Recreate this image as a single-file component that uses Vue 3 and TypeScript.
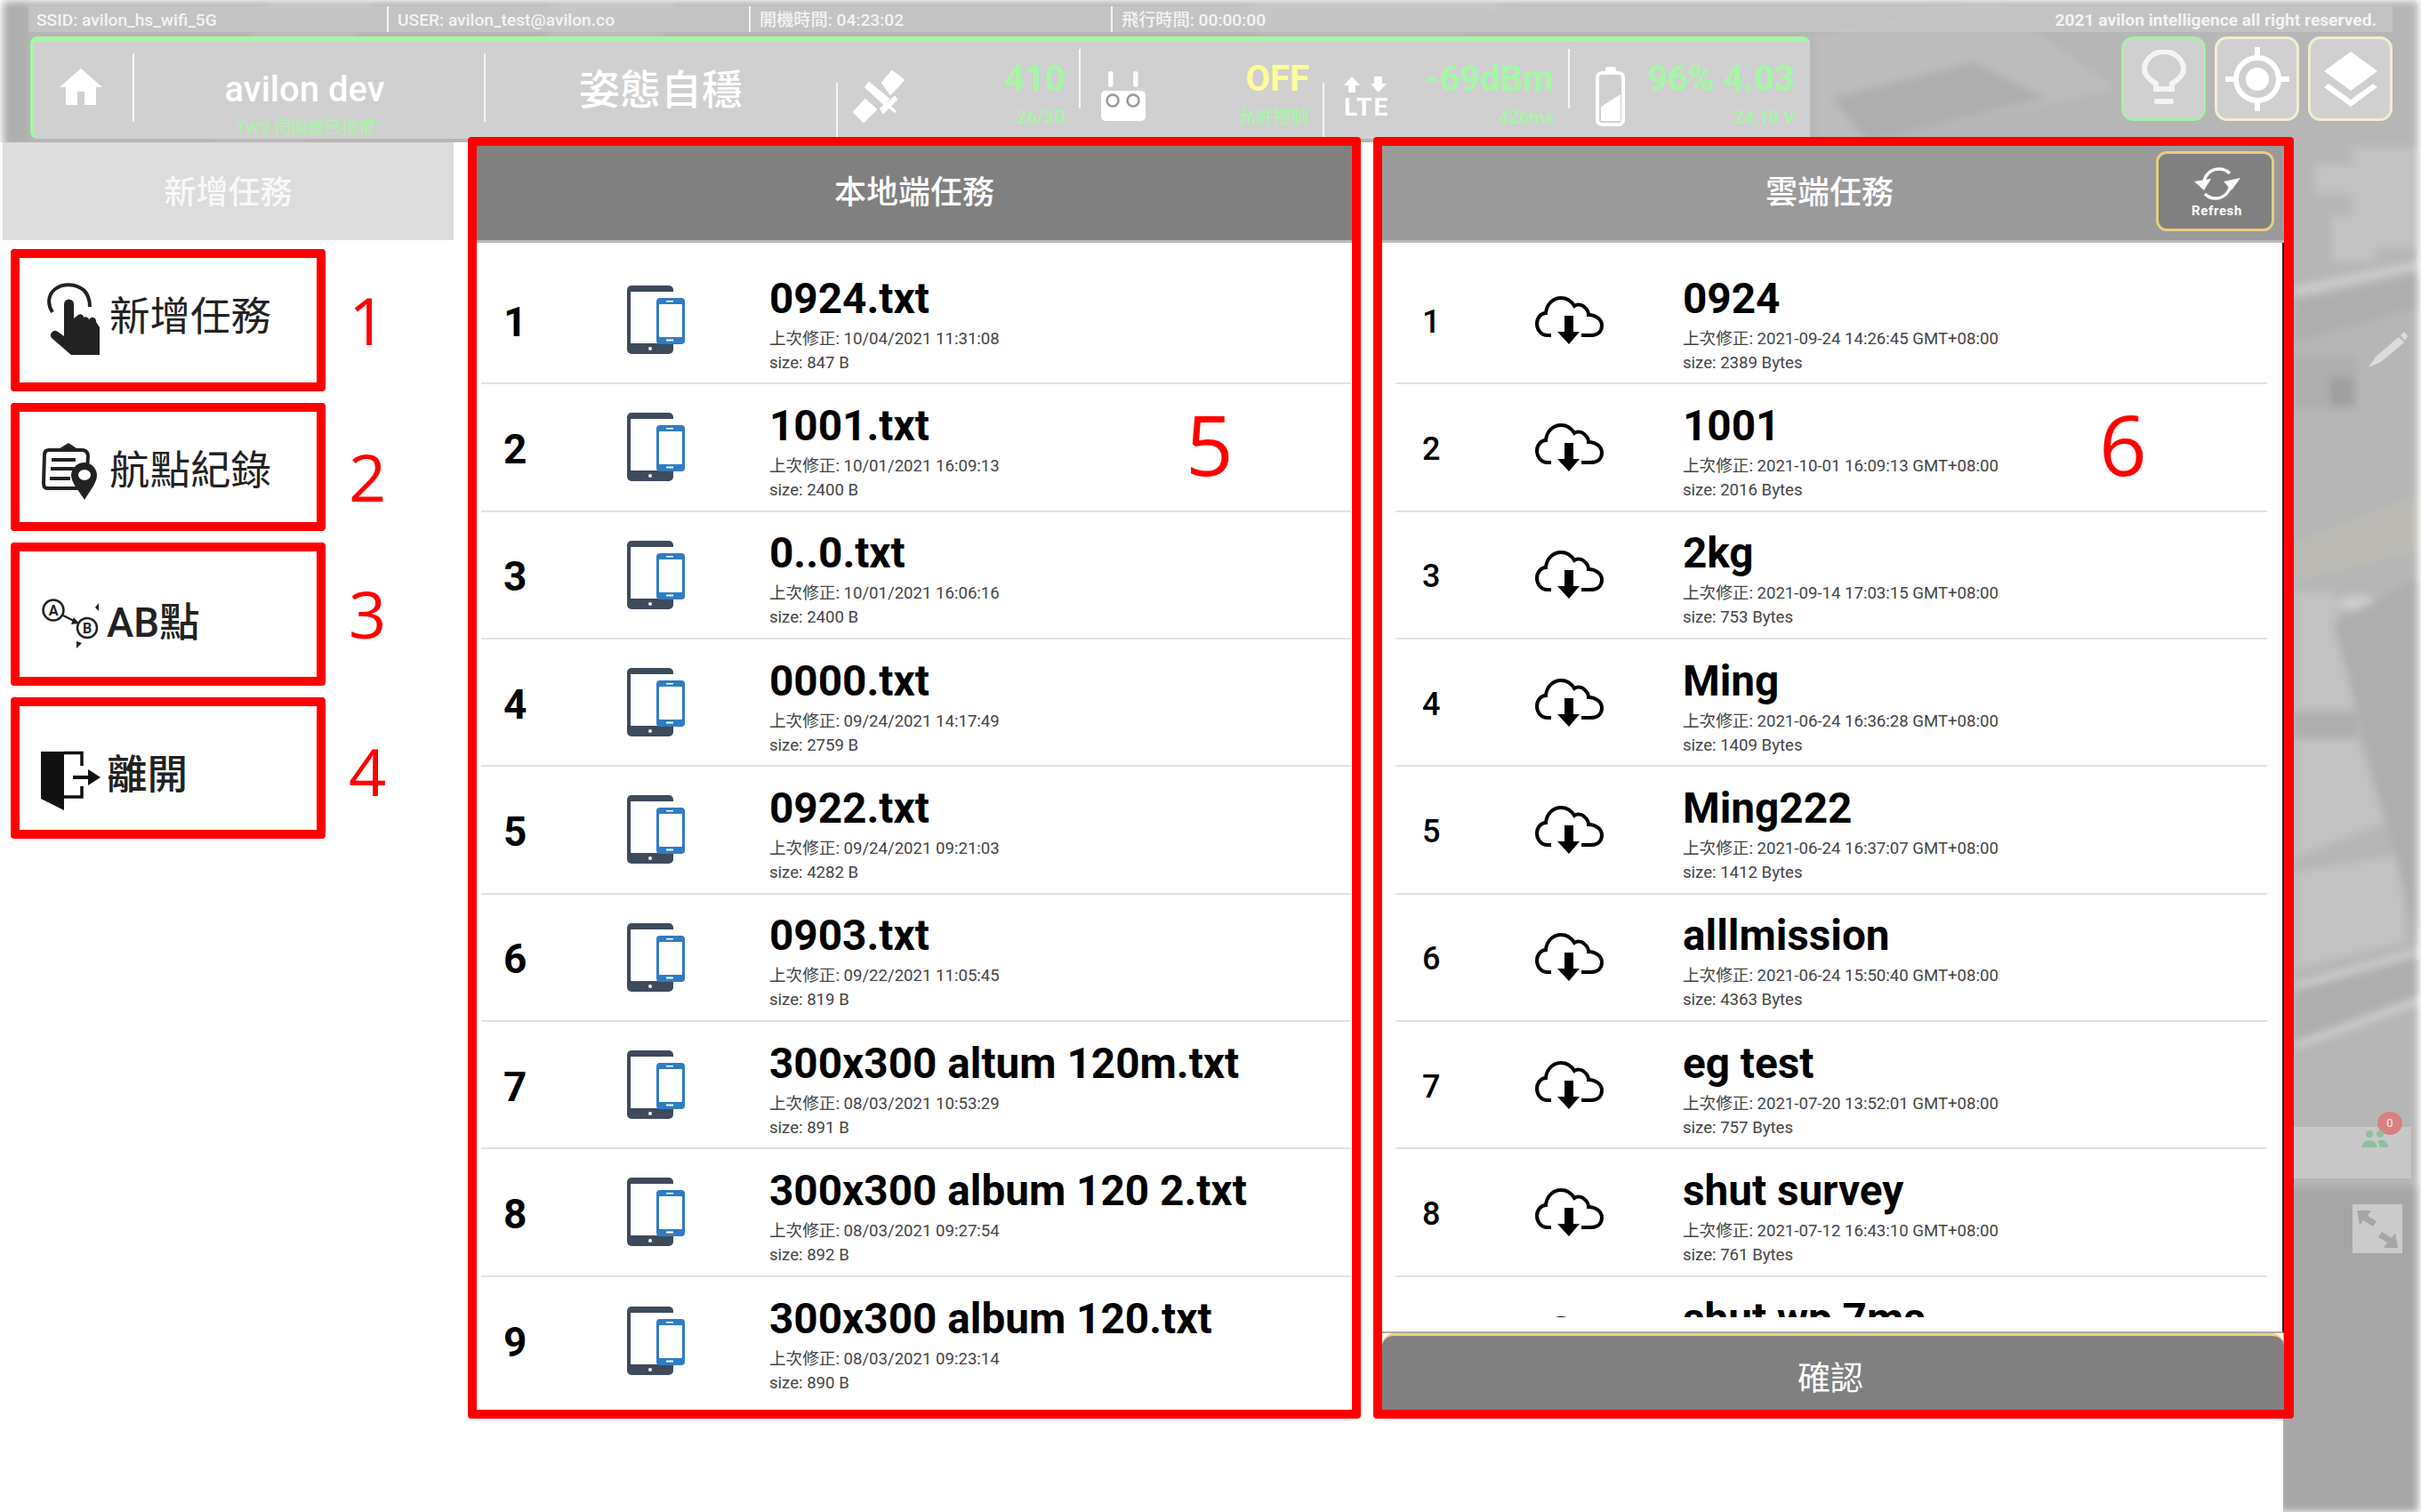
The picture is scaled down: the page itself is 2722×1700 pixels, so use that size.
<script setup lang="ts">
interface Mission {
  name: string
  time: string
  size: string
}

const localMissions: Mission[] = [
  { name: '0924.txt', time: '10/04/2021 11:31:08', size: '847 B' },
  { name: '1001.txt', time: '10/01/2021 16:09:13', size: '2400 B' },
  { name: '0..0.txt', time: '10/01/2021 16:06:16', size: '2400 B' },
  { name: '0000.txt', time: '09/24/2021 14:17:49', size: '2759 B' },
  { name: '0922.txt', time: '09/24/2021 09:21:03', size: '4282 B' },
  { name: '0903.txt', time: '09/22/2021 11:05:45', size: '819 B' },
  { name: '300x300 altum 120m.txt', time: '08/03/2021 10:53:29', size: '891 B' },
  { name: '300x300 album 120 2.txt', time: '08/03/2021 09:27:54', size: '892 B' },
  { name: '300x300 album 120.txt', time: '08/03/2021 09:23:14', size: '890 B' },
]

const cloudMissions: Mission[] = [
  { name: '0924', time: '2021-09-24 14:26:45 GMT+08:00', size: '2389 Bytes' },
  { name: '1001', time: '2021-10-01 16:09:13 GMT+08:00', size: '2016 Bytes' },
  { name: '2kg', time: '2021-09-14 17:03:15 GMT+08:00', size: '753 Bytes' },
  { name: 'Ming', time: '2021-06-24 16:36:28 GMT+08:00', size: '1409 Bytes' },
  { name: 'Ming222', time: '2021-06-24 16:37:07 GMT+08:00', size: '1412 Bytes' },
  { name: 'alllmission', time: '2021-06-24 15:50:40 GMT+08:00', size: '4363 Bytes' },
  { name: 'eg test', time: '2021-07-20 13:52:01 GMT+08:00', size: '757 Bytes' },
  { name: 'shut survey', time: '2021-07-12 16:43:10 GMT+08:00', size: '761 Bytes' },
  { name: 'shut wp 7ms', time: '2021-07-12 16:20:11 GMT+08:00', size: '702 Bytes' },
]
</script>

<template>
  <div class="page">
    <!-- 底圖 -->
    <svg class="map" viewBox="0 0 2722 1700" width="2722" height="1700">
      <rect x="3" y="1" width="2716" height="1699" fill="#b6b6b6" />
      <!-- 上方 -->
      <g fill="#bcbcbc">
        <polygon points="300,1 420,1 340,160 240,160" />
        <polygon points="620,1 760,1 700,160 600,160" />
        <polygon points="1400,1 1700,1 1640,40 1420,40" />
        <polygon points="2040,40 2240,1 2380,100 2100,160 2040,160" />
      </g>
      <g fill="#aeaeae">
        <polygon points="3,1 30,1 30,160 3,160" />
        <polygon points="2060,110 2220,70 2300,110 2100,160" />
      </g>
      <!-- 右側 -->
      <g fill="#c1c1c1">
        <polygon points="2602,184 2644,184 2644,219 2602,219" />
        <polygon points="2644,165 2719,165 2719,280 2644,280" />
        <polygon points="2621,242 2671,242 2671,295 2621,295" />
        <polygon points="2579,664 2624,664 2648,800 2579,800" />
        <polygon points="2579,830 2651,830 2682,925 2579,965" />
        <polygon points="2579,980 2700,960 2705,1060 2579,1090" />
      </g>
      <g fill="#cccccc">
        <polygon points="2579,322 2719,293 2719,303 2579,333" />
        <polygon points="2580,1105 2719,1066 2719,1074 2580,1113" />
        <polygon points="2580,1172 2719,1120 2719,1130 2580,1180" />
        <ellipse cx="2650" cy="678" rx="22" ry="9" />
        <ellipse cx="2690" cy="680" rx="16" ry="7" />
      </g>
      <g fill="#aeaeae">
        <polygon points="2579,340 2719,310 2719,345 2579,385" />
        <polygon points="2624,700 2719,650 2719,1060 2682,920" />
        <polygon points="2579,800 2650,800 2650,830 2579,830" />
        <polygon points="2579,1115 2719,1078 2719,1118 2579,1170" />
      </g>
      <rect x="2620" y="425" width="26" height="31" fill="#999" />
      <polygon points="2579,610 2719,555 2719,620 2579,655" fill="#bcbab4" />
      <rect x="2579" y="400" width="70" height="60" fill="#a6a6a6" opacity="0.5" />
      <rect x="2567" y="1335" width="152" height="365" fill="#a6a6a6" />
    </svg>

    <header class="top">
      <div class="status-bar">
        <span class="status-cell">SSID: avilon_hs_wifi_5G</span>
        <span class="status-cell">USER: avilon_test@avilon.co</span>
        <span class="status-cell">開機時間: 04:23:02</span>
        <span class="status-cell last">飛行時間: 00:00:00</span>
        <span class="copyright">2021 avilon intelligence all right reserved.</span>
      </div>

      <div class="top-row">
        <div class="info-panel">
          <div class="sec sec-home">
            <svg width="48" height="41" viewBox="0 0 48 41" fill="#fff">
              <path d="M24 0 48 21H41V41H28V26H20V41H7V21H0Z" />
            </svg>
          </div>
          <i class="sep sep-a"></i>
          <div class="sec sec-name">
            <div class="drone-name">avilon dev</div>
            <div class="drone-sub">TW2 伺服器已授權</div>
          </div>
          <i class="sep sep-a"></i>
          <div class="sec sec-mode">姿態自穩</div>
          <i class="sep sep-b"></i>

          <div class="sec sec-stat sec-gps">
            <svg class="stat-icon" width="60" height="60" viewBox="0 0 60 60" fill="#fff" stroke="#fff" stroke-width="2" stroke-linejoin="round">
              <polygon points="45,2 58,12 43,28 34,15" />
              <polygon points="15,34 27,45 13,59 2,48" />
              <polygon points="19,15 15,20 36,39 41,33" />
              <polygon points="32,44 48,31 50,34 35,49" />
              <path d="M42 42 49 48" stroke-width="3" fill="none" />
            </svg>
            <div class="stat">
              <div class="val green">410</div>
              <div class="sub">26/3D</div>
            </div>
          </div>
          <i class="sep sep-c"></i>

          <div class="sec sec-stat sec-rc">
            <svg class="stat-icon" width="50" height="56" viewBox="0 0 50 56" fill="#fff">
              <rect x="8" y="0" width="5.5" height="18" rx="2.7" />
              <rect x="36" y="0" width="5.5" height="18" rx="2.7" />
              <rect x="0" y="22" width="50" height="34" rx="5" />
              <circle cx="13" cy="33" r="6.5" fill="none" stroke="#999" stroke-width="2.5" />
              <circle cx="36" cy="33" r="6.5" fill="none" stroke="#999" stroke-width="2.5" />
            </svg>
            <div class="stat">
              <div class="val yellow">OFF</div>
              <div class="sub">允許控制</div>
            </div>
          </div>
          <i class="sep sep-b"></i>

          <div class="sec sec-stat sec-lte">
            <div class="stat-icon lte-icon">
              <svg width="48" height="18" viewBox="0 0 48 18" fill="#fff">
                <polygon points="9,0 18,10 13,10 13,18 5,18 5,10 0,10" />
                <polygon points="34,0 43,0 43,8 48,8 38.5,18 30,8 34,8" />
              </svg>
              <span class="lte-text">LTE</span>
            </div>
            <div class="stat">
              <div class="val green">-69dBm</div>
              <div class="sub">426ms</div>
            </div>
          </div>
          <i class="sep sep-c"></i>

          <div class="sec sec-stat sec-batt">
            <svg class="stat-icon" width="33" height="67" viewBox="0 0 33 67" fill="#fff">
              <rect x="11" y="0" width="12" height="8" rx="3" />
              <rect x="2" y="7" width="29" height="58" rx="5" fill="none" stroke="#fff" stroke-width="4" />
              <polygon points="6,45 28,31 28,61 6,61" />
            </svg>
            <div class="stat">
              <div class="val green">96% 4.03</div>
              <div class="sub">24.18 V</div>
            </div>
          </div>
        </div>

        <div class="tool-btns">
          <button class="tool-btn on">
            <svg width="50" height="66" viewBox="0 0 50 66" fill="none" stroke="#f4f4f4" stroke-width="6">
              <path d="M16 44V38C8 33 3 28 3 22A22 20 0 0 1 47 22C47 28 42 33 34 38V44Z" />
              <rect x="14" y="55" width="22" height="6" fill="#f4f4f4" stroke="none" rx="2" />
            </svg>
          </button>
          <button class="tool-btn">
            <svg width="72" height="72" viewBox="0 0 72 72" fill="none" stroke="#fff">
              <circle cx="36" cy="36" r="24" stroke-width="6" />
              <circle cx="36" cy="36" r="13" fill="#fff" stroke="none" />
              <path d="M36 0V12M36 60V72M0 36H12M60 36H72" stroke-width="6" />
            </svg>
          </button>
          <button class="tool-btn">
            <svg width="60" height="62" viewBox="0 0 60 62" fill="#fff">
              <polygon points="30,0 60,22 30,44 0,22" />
              <polygon points="5,36 30,54 55,36 60,40 30,62 0,40" />
            </svg>
          </button>
        </div>
      </div>
    </header>

    <main class="content">
      <aside class="left-col">
        <div class="left-head">新增任務</div>
        <div class="menu">
          <div class="menu-row">
            <div class="menu-box">
              <svg class="ic-hand" width="60" height="81" viewBox="0 0 60 81">
                <path d="M7 33C1 24 2 13 10 7 19 0 33 1 42 8 47 13 49 20 49 27" fill="none" stroke="#222" stroke-width="4" />
                <path fill="#222" d="M20 24a5.5 5.5 0 0 1 11 0v16l5-4a4 4 0 0 1 6 2v1a4 4 0 0 1 6 2v1a4 4 0 0 1 8 2l4 6V81H28L6 62a5 5 0 0 1 7-7l7 5Z" />
              </svg>
              <span class="menu-text">新增任務</span>
            </div>
            <span class="note">1</span>
          </div>
          <div class="menu-row">
            <div class="menu-box">
              <svg class="ic-log" width="63" height="65" viewBox="0 0 63 65">
                <g fill="none" stroke="#222" stroke-width="4">
                  <path d="M8 9H46Q52 10 52 16L50 46Q49 52 43 52H6Q2 52 2 46L3 14Q3 9 8 9Z" />
                  <path d="M11 20H38M10 30H36M9 41H32" />
                </g>
                <polygon points="17,9 30,1 42,9" fill="#222" />
                <path fill="#222" d="M48 23A15 15 0 0 1 62 37C62 46 54 55 48 65 42 55 33 46 33 37A15 15 0 0 1 48 23Z" />
                <ellipse cx="48" cy="37" rx="7" ry="6" fill="#fff" />
              </svg>
              <span class="menu-text log">航點紀錄</span>
            </div>
            <span class="note">2</span>
          </div>
          <div class="menu-row">
            <div class="menu-box">
              <svg class="ic-ab" width="65" height="56" viewBox="0 0 65 56">
                <g fill="none" stroke="#222" stroke-width="2.5">
                  <circle cx="13" cy="13" r="11.5" />
                  <circle cx="51" cy="33" r="11" />
                  <path d="M24 19 38 26" />
                </g>
                <polygon points="36,21 42,28 33,29" fill="#222" />
                <polygon points="60,10 64,5 64,14" fill="#222" />
                <polygon points="39,48 45,50 39,56" fill="#222" />
                <text x="13" y="19" class="ic-ab-text">A</text>
                <text x="51" y="39" class="ic-ab-text">B</text>
              </svg>
              <span class="menu-text ab">AB點</span>
            </div>
            <span class="note">3</span>
          </div>
          <div class="menu-row">
            <div class="menu-box">
              <svg class="ic-exit" width="68" height="68" viewBox="0 0 68 68">
                <polygon points="1,2 27,2 27,68 1,55" fill="#111" />
                <path d="M27 3.5H47V18M47 41V53H27" fill="none" stroke="#111" stroke-width="3.5" />
                <path d="M37 31H56" stroke="#111" stroke-width="4" />
                <polygon points="54,22 68,31 54,40" fill="#111" />
              </svg>
              <span class="menu-text exit">離開</span>
            </div>
            <span class="note">4</span>
          </div>
        </div>
      </aside>

      <!-- 本地端任務 -->
      <section class="task-box local">
        <div class="box-head">本地端任務</div>
        <div class="list-wrap">
          <div class="list">
            <div v-for="(m, i) in localMissions" :key="m.name" class="row">
              <span class="row-no">{{ i + 1 }}</span>
              <svg width="65" height="77" viewBox="0 0 65 77">
                <rect width="52" height="77" rx="5" fill="#3f4a5a" />
                <rect x="4" y="7" width="49" height="58" fill="#fff" />
                <circle cx="26" cy="71" r="2" fill="#fff" />
                <rect x="33" y="14" width="32" height="52" rx="4" fill="#2f7cc4" />
                <rect x="36" y="21" width="26" height="37" rx="1" fill="#fff" />
                <rect x="44" y="17" width="8" height="1.5" fill="#fff" />
                <rect x="44" y="60.5" width="8" height="2" fill="#fff" />
              </svg>
              <div class="row-text">
                <div class="row-title">{{ m.name }}</div>
                <div class="row-sub">上次修正: {{ m.time }}</div>
                <div class="row-sub">size: {{ m.size }}</div>
              </div>
            </div>
          </div>
        </div>
        <span class="note note-big">5</span>
      </section>

      <!-- 雲端任務 -->
      <section class="task-box cloud">
        <div class="box-head">
          雲端任務
          <button class="refresh">
            <svg width="52" height="38" viewBox="0 0 52 38" fill="none" stroke="#fff" stroke-width="3.5">
              <path d="M11 16C13 7 20 2 28 2 33 2 37 4 40 7" />
              <path d="M41 20C39 30 32 35 24 35 19 35 15 33 12 30" />
              <polygon points="0,16 19,13 11,26" fill="#fff" stroke="none" />
              <polygon points="52,12 33,16 42,26" fill="#fff" stroke="none" />
            </svg>
            <span class="refresh-text">Refresh</span>
          </button>
        </div>
        <div class="list-wrap">
          <div class="list">
            <div v-for="(m, i) in cloudMissions" :key="m.name" class="row">
              <span class="row-no">{{ i + 1 }}</span>
              <svg width="77" height="54" viewBox="0 0 77 54">
                <path d="M18 44H14C6 44 2 37 2 31 2 24 7 19 12 19 13 8 21 2 29 2 36 2 41 6 44 11 47 9 52 9 55 12 59 15 60 19 60 21 68 21 75 26 75 33 75 40 70 44 62 44H52" fill="none" stroke="#000" stroke-width="4" />
                <rect x="33" y="22" width="10" height="20" fill="#000" />
                <polygon points="25,40 50,40 38,54" fill="#000" />
              </svg>
              <div class="row-text">
                <div class="row-title">{{ m.name }}</div>
                <div class="row-sub">上次修正: {{ m.time }}</div>
                <div class="row-sub">size: {{ m.size }}</div>
              </div>
            </div>
          </div>
        </div>
        <button class="confirm">確認</button>
        <span class="note note-big">6</span>
      </section>
    </main>

    <!-- 地圖上的控制項 -->
    <svg class="pen" width="44" height="40" viewBox="0 0 44 40" fill="#dcdcdc">
      <polygon points="0,40 8,28 34,6 40,12 14,34" />
      <polygon points="36,4 40,0 44,5 41,10" />
    </svg>
    <div class="count-box"></div>
    <div class="badge">0</div>
    <svg class="people" width="34" height="22" viewBox="0 0 34 22" fill="#8fbfa0">
      <circle cx="11" cy="5" r="4" />
      <circle cx="23" cy="5" r="4" />
      <path d="M2 20Q4 12 11 12T20 20ZM20 13Q24 11 27 12T33 20H23Z" />
    </svg>
    <div class="expand">
      <svg width="50" height="46" viewBox="0 0 50 46" fill="#a6a6a6">
        <polygon points="2,2 18,2 14,8 24,14 20,20 9,13 5,19" />
        <polygon points="48,44 32,44 36,38 26,32 30,26 41,33 45,27" />
      </svg>
    </div>
  </div>
</template>

<style>
html,
body {
  margin: 0;
  background: #fff;
}
</style>

<style scoped>
.page {
  position: relative;
  width: 2722px;
  height: 1700px;
  overflow: hidden;
  background: #fff;
  font-family: Roboto, "Noto Sans CJK TC", sans-serif;
}

.map {
  position: absolute;
  inset: 0;
  filter: blur(4px);
}

.top {
  position: relative;
  height: 153px;
  padding-top: 7px;
}

.status-bar {
  display: flex;
  align-items: center;
  height: 29px;
  margin: 0 32px;
  background: rgba(210, 210, 210, 0.45);
  color: #f4f4f4;
  font-size: 19.2px;
  font-weight: 500;
}

.status-cell {
  box-sizing: border-box;
  width: 407px;
  height: 100%;
  padding-left: 10px;
  line-height: 31px;
  border-right: 2px solid #f4f4f4;
}

.status-cell:first-child {
  width: 405px;
  padding-left: 9px;
}

.status-cell.last {
  border-right: none;
  width: auto;
}

.copyright {
  margin-left: auto;
  padding: 2px 18px 0 0;
  font-weight: 700;
  font-size: 19.2px;
}

.top-row {
  display: flex;
  margin-top: 5px;
}

.info-panel {
  box-sizing: border-box;
  display: flex;
  width: 2001px;
  height: 115px;
  margin-left: 34px;
  background: #d0d0d0;
  border-top: 6px solid #a6f6a6;
  border-left: 4px solid #a6f6a6;
  border-radius: 8px 8px 0 8px;
  color: #fff;
}

.sec {
  box-sizing: border-box;
  flex: none;
}

.sep {
  flex: none;
  width: 2px;
  background: #f6f6f6;
}

.sep-a {
  height: 77px;
  margin-top: 13px;
}

.sep-b {
  height: 63px;
  margin-top: 46px;
}

.sep-c {
  height: 67px;
  margin-top: 8px;
}

.sec-home {
  width: 111px;
  padding: 30px 0 0 29px;
}

.sec-name {
  width: 393px;
  padding-right: 10px;
  text-align: center;
}

.drone-name {
  margin-top: 30px;
  font-size: 40px;
  font-weight: 500;
  line-height: 48px;
}

.drone-sub {
  margin-top: 6px;
  color: #a6f6a6;
  font-size: 19px;
  line-height: 26px;
  margin-left: 2px;
}

.sec-mode {
  width: 394px;
  padding-top: 24px;
  font-size: 46px;
  font-weight: 500;
  line-height: 60px;
  text-align: center;
}

.sec-stat {
  display: flex;
}

.sec-gps {
  width: 271px;
}

.sec-rc {
  width: 272px;
}

.sec-lte {
  width: 274px;
}

.sec-batt {
  width: 262px;
}

.stat-icon {
  flex: none;
  margin-top: 31px;
}

.sec-gps .stat-icon {
  margin-left: 16px;
}

.sec-rc .stat-icon {
  margin-left: 23px;
  margin-top: 33px;
}

.sec-lte .stat-icon {
  margin-left: 22px;
  margin-top: 39px;
}

.sec-batt .stat-icon {
  margin-left: 29px;
  margin-top: 28px;
}

.lte-icon {
  display: flex;
  flex-direction: column;
  align-items: flex-start;
  width: 52px;
}

.lte-text {
  margin-top: 5px;
  font-size: 28px;
  font-weight: 700;
  letter-spacing: 2px;
  line-height: 24px;
}

.stat {
  flex: 1;
  text-align: right;
}

.sec-gps .stat,
.sec-rc .stat {
  padding-right: 15px;
}

.sec-lte .stat {
  padding-right: 16px;
}

.sec-batt .stat {
  padding-right: 9px;
}

.val {
  margin-top: 18px;
  font-size: 40px;
  font-weight: 700;
  line-height: 48px;
}

.sub {
  margin-top: 6px;
  color: #a6f6a6;
  font-size: 20px;
  font-weight: 500;
  line-height: 26px;
}

.green {
  color: #a6f6a6;
}

.yellow {
  color: #fdfd96;
}

.tool-btns {
  display: flex;
  gap: 10px;
  margin-left: auto;
  margin-right: 32px;
}

.tool-btn {
  box-sizing: border-box;
  display: flex;
  align-items: center;
  justify-content: center;
  width: 95px;
  height: 95px;
  padding: 0;
  background: #d0d0d0;
  border: 3px solid #f4ecd2;
  border-radius: 14px;
}

.tool-btn.on {
  border-color: #a6f0a6;
}

.content {
  position: relative;
  display: flex;
  align-items: flex-start;
  width: 2567px;
  height: 1540px;
  background: #fff;
}

.left-col {
  flex: none;
  width: 507px;
  margin-left: 3px;
}

.left-head {
  height: 110px;
  background: #dcdcdc;
  color: #f8f8f8;
  font-size: 36px;
  font-weight: 500;
  line-height: 114px;
  text-align: center;
}

.menu {
  display: flex;
  flex-direction: column;
  gap: 13px;
  padding: 10px 0 0 9px;
}

.menu-row {
  display: flex;
  align-items: center;
}

.menu-box {
  box-sizing: border-box;
  display: flex;
  align-items: center;
  width: 354px;
  height: 160px;
  border: 10px solid #f00;
  border-radius: 4px;
}

.menu-row:nth-child(2) .menu-box {
  height: 144px;
}

.menu-row:nth-child(3) .menu-box {
  height: 161px;
}

.menu-row:nth-child(4) .menu-box {
  height: 159px;
}

.menu-text {
  margin-bottom: 6px;
  color: #222;
  font-size: 45.5px;
  line-height: 60px;
}

.menu-text.log {
  margin-bottom: 0;
  margin-top: 10px;
}

.ic-hand {
  margin: 0 11px 4px 30px;
}

.ic-log {
  margin: 8px 13px 0 25px;
}

.ic-ab {
  margin: 20px 8px 0 25px;
}

.ic-ab-text {
  fill: #222;
  font-size: 16px;
  font-weight: 700;
  text-anchor: middle;
}

.ic-exit {
  margin: 26px 7px 0 23px;
}

.menu-text.ab {
  margin-bottom: 0;
  margin-top: 20px;
  font-weight: 500;
}

.menu-text.exit {
  margin-bottom: 0;
  margin-top: 16px;
  font-weight: 500;
}

.note {
  margin-left: 26px;
  color: #f00;
  font-family: "Open Sans", sans-serif;
  font-size: 74px;
  line-height: 90px;
}

.menu-row:nth-child(2) .note {
  margin-top: 22px;
}

.menu-row:nth-child(3) .note {
  margin-top: -2px;
}

.menu-row:nth-child(4) .note {
  margin-top: 6px;
}

.note-big {
  position: absolute;
  top: 280px;
  margin: 0;
  font-size: 94px;
  line-height: 110px;
}

.local .note-big {
  left: 797px;
}

.cloud .note-big {
  left: 806px;
}

.task-box {
  position: relative;
  flex: none;
  box-sizing: border-box;
  display: flex;
  flex-direction: column;
  height: 1441px;
  margin-top: -6px;
  border: 10px solid #f00;
  border-radius: 4px;
}

.local {
  width: 1004px;
  margin-left: 16px;
}

.cloud {
  width: 1035px;
  margin-left: 14px;
  border-right-width: 11px;
}

.box-head {
  position: relative;
  flex: none;
  height: 106px;
  background: #808080;
  border-bottom: 3px solid #bbb;
  color: #fff;
  font-size: 36px;
  font-weight: 500;
  line-height: 106px;
  text-align: center;
}

.cloud .box-head {
  background: #9a9a9a;
  padding-right: 8px;
}

.refresh {
  position: absolute;
  top: 6px;
  right: 11px;
  box-sizing: border-box;
  display: flex;
  flex-direction: column;
  align-items: center;
  width: 133px;
  height: 90px;
  padding: 15px 0 0 4px;
  background: #808080;
  border: 3px solid #e8cc80;
  border-radius: 12px;
  color: #fff;
}

.refresh-text {
  margin-top: 2px;
  font-family: Roboto, sans-serif;
  font-size: 15px;
  font-weight: 700;
  letter-spacing: 0.6px;
  line-height: 18px;
}

.list-wrap {
  flex: 1;
  min-height: 0;
  background: #fff;
}

.cloud .list-wrap {
  box-sizing: border-box;
  padding-bottom: 16px;
  border-right: 2px solid #222;
  border-bottom: 2px solid #aaa;
}

.list {
  height: 100%;
  overflow: hidden;
  padding-top: 16px;
  box-sizing: border-box;
}

.row {
  box-sizing: border-box;
  display: grid;
  grid-template-columns: 139px 161px 1fr;
  align-items: center;
  height: 143.33px;
  margin: 0 1px 0 5px;
  padding-left: 25px;
  border-bottom: 2px solid #e2e2e2;
}

.row:last-child {
  border-bottom: none;
}

.cloud .row {
  grid-template-columns: 127px 167px 1fr;
  margin: 0 17px 0 15px;
  padding-left: 30px;
}

.row-no {
  padding-top: 4px;
  color: #000;
  font-size: 46px;
  font-weight: 700;
}

.cloud .row-no {
  font-size: 36px;
  font-weight: 500;
}

.row-text {
  margin-top: 13px;
  margin-left: -1px;
}

.row-title {
  color: #000;
  font-size: 47.7px;
  font-weight: 700;
  line-height: 50px;
  margin-bottom: 7px;
  white-space: nowrap;
}

.row-sub {
  color: #444;
  font-size: 18.6px;
  line-height: 27px;
  white-space: nowrap;
}

.confirm {
  flex: none;
  height: 86px;
  padding: 6px 6px 0 0;
  background: #808080;
  border: none;
  border-top: 3px solid #f0cf80;
  border-radius: 14px 14px 0 0;
  color: #fff;
  font-family: inherit;
  font-size: 37px;
}

.pen {
  position: absolute;
  left: 2663px;
  top: 373px;
}

.count-box {
  position: absolute;
  left: 2579px;
  top: 1267px;
  width: 132px;
  height: 58px;
  background: rgba(255, 255, 255, 0.25);
}

.badge {
  position: absolute;
  left: 2673px;
  top: 1250px;
  width: 28px;
  height: 26px;
  background: #d98080;
  border-radius: 50%;
  color: #eee;
  font-size: 13px;
  line-height: 26px;
  text-align: center;
}

.people {
  position: absolute;
  left: 2653px;
  top: 1270px;
}

.expand {
  position: absolute;
  left: 2645px;
  top: 1354px;
  display: flex;
  align-items: center;
  justify-content: center;
  width: 56px;
  height: 55px;
  background: #cbcbcb;
}
</style>
